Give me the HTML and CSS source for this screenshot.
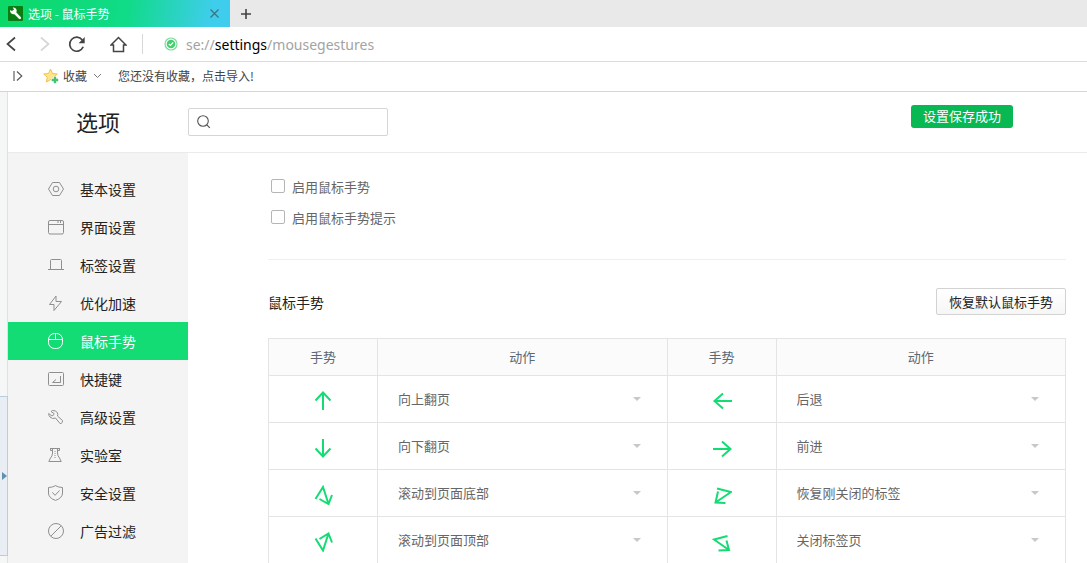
FILE: index.html
```html
<!DOCTYPE html>
<html lang="zh-CN">
<head>
<meta charset="utf-8">
<title>选项 - 鼠标手势</title>
<link rel="stylesheet" href="styles.css">
</head>
<body>
<div class="browser">
  <div class="tabbar">
    <div class="tab">
      <svg class="tab-logo" width="15" height="15" viewBox="0 0 15 15"><rect width="15" height="15" rx="1" fill="#0b7d10"/><path d="M5.500 5.500L11.800 11.800" stroke="#fff" stroke-width="2.600" stroke-linecap="round"/><path d="M2.200 4A3.300 3.300 0 1 0 4.800 1.600L6 3.800L4.300 5.200Z" fill="#fff"/></svg>
      <span class="tab-title">选项 - 鼠标手势</span>
      <button class="icon-button" aria-label="关闭"><svg width="9" height="9" viewBox="0 0 9 9"><path d="M.5 .5L8.500 8.500M8.500 .5L.5 8.500" stroke="#466f76" stroke-width="1.200"/></svg></button>
    </div>
    <button class="icon-button new-tab" aria-label="新标签"><svg width="10" height="10" viewBox="0 0 10 10"><path d="M5 0V10M0 5H10" stroke="#444" stroke-width="1.600"/></svg></button>
  </div>
  <div class="navbar">
    <button class="icon-button" aria-label="后退"><svg width="10" height="16" viewBox="0 0 10 16"><path d="M9 1.500L1.500 8L9 14.500" fill="none" stroke="#444" stroke-width="1.700"/></svg></button>
    <button class="icon-button forward" aria-label="前进"><svg width="10" height="16" viewBox="0 0 10 16"><path d="M1 1.500L8.500 8L1 14.500" fill="none" stroke="#d6d6d6" stroke-width="1.700"/></svg></button>
    <button class="icon-button reload" aria-label="刷新"><svg width="18" height="17" viewBox="0 0 18 17"><path d="M15.200 10.800A7 7 0 1 1 14.300 4" fill="none" stroke="#444" stroke-width="1.700"/><path d="M16.700 1V7.200H10.600Z" fill="#444"/></svg></button>
    <button class="icon-button home" aria-label="主页"><svg width="17" height="17" viewBox="0 0 17 17"><path d="M1 9L8.500 1.500L16 9H13.500V15.500H3.500V9Z" fill="none" stroke="#444" stroke-width="1.500"/></svg></button>
    <span class="nav-divider"></span>
    <svg class="safe" width="14" height="14" viewBox="0 0 14 14"><circle cx="7" cy="7" r="6" fill="none" stroke="#7bdc97" stroke-width="1.200"/><circle cx="7" cy="7" r="4.300" fill="#45cf6e"/><path d="M4.800 7L6.400 8.500L9.200 5.500" fill="none" stroke="#fff" stroke-width="1.100"/></svg>
    <span class="url">se://<span class="url-host">settings</span>/mousegestures</span>
  </div>
  <div class="bookmarks">
    <button class="icon-button" aria-label="展开"><svg width="10" height="12" viewBox="0 0 10 12"><path d="M1 1V11M4 1.500L8.800 6L4 10.500" fill="none" stroke="#555" stroke-width="1.100"/></svg></button>
    <button class="favorites"><svg width="16" height="16" viewBox="0 0 16 16"><path d="M7.500 1L9.500 5.500L14.300 6L10.700 9.300L11.700 14L7.500 11.600L3.300 14L4.300 9.300L.7 6L5.500 5.500Z" fill="#ffe68a" stroke="#f3c04e"/><path d="M12 8.500V15.500M8.500 12H15.500" stroke="#fff" stroke-width="4"/><path d="M12 8.800V15.200M8.800 12H15.200" stroke="#45c074" stroke-width="2.400"/></svg><span>收藏</span><svg width="9" height="6" viewBox="0 0 9 6"><path d="M1 1L4.500 4.500L8 1" fill="none" stroke="#777"/></svg></button>
    <a class="import" href="#">您还没有收藏，点击导入!</a>
  </div>

  <div class="page">
    <div class="edge"><button class="handle" aria-label="展开侧栏"><svg width="5" height="8" viewBox="0 0 5 8"><path d="M0 0L5 4L0 8Z" fill="#5f91b0"/></svg></button></div>
    <div class="settings">
      <header class="header">
        <h1 class="title">选项</h1>
        <label class="search"><svg width="14" height="14" viewBox="0 0 14 14"><circle cx="6" cy="6" r="5.300" fill="none" stroke="#555" stroke-width="1.100"/><path d="M9.800 9.800L12.800 12.800" stroke="#555" stroke-width="1.200"/></svg><input type="text" aria-label="搜索设置"></label>
        <div class="toast" role="status">设置保存成功</div>
      </header>
      <div class="body">
        <nav class="sidebar">
          <a class="item" href="#"><svg class="icon" viewBox="0 0 16 16"><path d="M4.500 1.500H11.500L15.500 8L11.500 14.500H4.500L.5 8Z"/><circle cx="8" cy="8" r="2.800"/></svg>基本设置</a>
          <a class="item" href="#"><svg class="icon" viewBox="0 0 16 16"><rect x=".5" y="1.500" width="15" height="13.500" rx="1.500"/><path d="M.5 5.500H15.500M10 2V4M12.500 2V4"/></svg>界面设置</a>
          <a class="item" href="#"><svg class="icon" viewBox="0 0 16 16"><path d="M0 12.500H3.500M12.500 12.500H16M2.500 12.500V3.500Q2.500 2.500 3.500 2.500H12.500Q13.500 2.500 13.500 3.500V12.500H2.500"/></svg>标签设置</a>
          <a class="item" href="#"><svg class="icon" viewBox="0 0 16 16"><path d="M8 1L1.500 9.500H6V15.500L13.500 6.500H8Z"/></svg>优化加速</a>
          <a class="item active" href="#" aria-current="page"><svg class="icon" viewBox="0 0 16 16"><rect x=".5" y=".5" width="14" height="15" rx="6"/><path d="M.5 6.500H14.500M7.500 .5V6.500"/></svg>鼠标手势</a>
          <a class="item" href="#"><svg class="icon" viewBox="0 0 16 16"><rect x=".5" y="1.500" width="15" height="13" rx="1"/><path d="M12.500 5V11.500H4.500L8 8.500"/></svg>快捷键</a>
          <a class="item" href="#"><svg class="icon" viewBox="0 0 16 16"><path d="M4.500 1.500Q8 1 9.500 4Q10 5.500 9.500 7L14.500 11.500Q15 13.500 13 14.500H12L7.500 9Q4.500 10.500 2 8Q.5 6.500 .7 4.500L4 7L6 5.500V4.500L3 2.500Z"/></svg>高级设置</a>
          <a class="item" href="#"><svg class="icon" viewBox="0 0 16 16"><path d="M2 1.500H12M4.500 1.500V6Q4.500 9 2.500 11L.8 14.500H13.200L11.500 11Q9.500 9 9.500 6V1.500M2.500 1.500V3.500H4.500M11.500 1.500V3.500H9.500"/><path d="M7 4V12" stroke-dasharray="1 1"/></svg>实验室</a>
          <a class="item" href="#"><svg class="icon" viewBox="0 0 16 16"><path d="M7.500 .6Q10.500 2.500 14.500 2.500V8Q14.500 13 7.500 15.400Q.5 13 .5 8V2.500Q4.500 2.500 7.500 .6ZM4.300 7.300L7 10.300L11.500 5.500"/></svg>安全设置</a>
          <a class="item" href="#"><svg class="icon" viewBox="0 0 16 16"><circle cx="8" cy="8" r="7.500"/><path d="M13.200 2.800L2.800 13.200"/></svg>广告过滤</a>
        </nav>
        <main class="main">
          <section class="options">
            <label class="option"><input type="checkbox">启用鼠标手势</label>
            <label class="option"><input type="checkbox">启用鼠标手势提示</label>
          </section>
          <div class="section-head">
            <h2>鼠标手势</h2>
            <button class="reset">恢复默认鼠标手势</button>
          </div>
          <table class="gestures">
            <colgroup><col class="col-gesture"><col><col class="col-gesture"><col></colgroup>
            <thead><tr><th>手势</th><th>动作</th><th>手势</th><th>动作</th></tr></thead>
            <tbody>
              <tr>
                <td><svg class="arrow" viewBox="0 0 20 20"><path d="M10 19V1.500M2.500 9.500L10 1.500L17.500 9.500"/></svg></td>
                <td><div class="pick"><select aria-label="上"><option>向上翻页</option></select></div></td>
                <td><svg class="arrow" viewBox="0 0 20 20"><path d="M20 10H2.500M11 2.500L2.500 10L11 17.500"/></svg></td>
                <td><div class="pick"><select aria-label="左"><option>后退</option></select></div></td>
              </tr>
              <tr>
                <td><svg class="arrow" viewBox="0 0 20 20"><path d="M10 1V18.500M2.500 10.500L10 18.500L17.500 10.500"/></svg></td>
                <td><div class="pick"><select aria-label="下"><option>向下翻页</option></select></div></td>
                <td><svg class="arrow" viewBox="0 0 20 20"><path d="M1 11H18.500M10 3.500L18.500 11L10 18.500"/></svg></td>
                <td><div class="pick"><select aria-label="右"><option>前进</option></select></div></td>
              </tr>
              <tr>
                <td><svg class="arrow" viewBox="0 0 20 20"><path d="M2.500 14L10 2L15.500 19M6.500 14L15.500 19L19 10"/></svg></td>
                <td><div class="pick"><select aria-label="上下"><option>滚动到页面底部</option></select></div></td>
                <td><svg class="arrow" viewBox="0 0 20 20"><path d="M5 3.500L19 7L3.500 17.500M6 6.500L3.500 17.500L13.500 18"/></svg></td>
                <td><div class="pick"><select aria-label="右左"><option>恢复刚关闭的标签</option></select></div></td>
              </tr>
              <tr>
                <td><svg class="arrow" viewBox="0 0 20 20"><path d="M2.500 6.500L10 18.500L15.500 1.500M6.500 7L15.500 1.500L19 10.500"/></svg></td>
                <td><div class="pick"><select aria-label="下上"><option>滚动到页面顶部</option></select></div></td>
                <td><svg class="arrow" viewBox="0 0 20 20"><path d="M15.500 4L2 7.500L17 18M14.500 8.500L17 18L6.500 18.500"/></svg></td>
                <td><div class="pick"><select aria-label="左右"><option>关闭标签页</option></select></div></td>
              </tr>
            </tbody>
          </table>
        </main>
      </div>
    </div>
  </div>
</div>
</body>
</html>
```

FILE: styles.css
```css
* { box-sizing: border-box; }
body {
  margin: 0;
  background: #fff;
  color: #222;
  font-family: "Noto Sans CJK SC", sans-serif;
  font-size: 13px;
}
button, input, select { font: inherit; color: inherit; }
button { cursor: pointer; }
a { color: inherit; text-decoration: none; }
h1, h2 { margin: 0; font-weight: 400; }
svg { display: block; flex: none; }

.browser { display: flex; flex-direction: column; height: 100vh; overflow: hidden; }
.icon-button { display: flex; padding: 0; border: 0; background: none; }

.tabbar { display: flex; flex: none; height: 27px; background: #e9e9e9; }
.tab {
  display: flex;
  align-items: center;
  gap: 5px;
  width: 230px;
  padding: 0 11px 0 8px;
  background: linear-gradient(100deg, #0cd868 0%, #10db88 55%, #3fcdee 92%);
  color: #fff;
  font-size: 12px;
}
.tab-title { flex: 1; }
.new-tab { align-self: center; margin-left: 11px; }

.navbar {
  display: flex;
  flex: none;
  align-items: center;
  height: 35px;
  padding-left: 6px;
  border-bottom: 1px solid #dcdcdc;
}
.forward { margin-left: 24px; }
.reload { margin-left: 18px; }
.home { margin-left: 24px; }
.nav-divider { width: 1px; height: 20px; margin: 0 21px 0 15px; background: #d8d8d8; }
.url { margin-left: 8px; color: #a3a3a3; font-family: "Noto Sans", sans-serif; font-size: 14px; }
.url-host { color: #000; }

.bookmarks {
  display: flex;
  flex: none;
  align-items: center;
  height: 30px;
  padding: 0 13px 2px;
  border-bottom: 1px solid #d2d6d4;
  color: #444;
  font-size: 12px;
}
.favorites {
  display: flex;
  align-items: center;
  gap: 4px;
  margin: 0 16px 0 20px;
  padding: 0;
  border: 0;
  background: none;
}
.favorites svg:last-child { margin-left: 2px; }

.page { display: flex; flex: 1; min-height: 0; }
.edge {
  display: flex;
  flex-direction: column;
  justify-content: flex-end;
  width: 8px;
  padding-bottom: 7px;
  border-right: 1px solid #e0e2e2;
  background: #f5f7f7;
}
.handle {
  display: flex;
  align-items: center;
  width: 8px;
  height: 160px;
  padding: 0 0 0 2px;
  border: 1px solid #b9cedc;
  border-left: 0;
  background: #e8eef4;
}
.settings { display: flex; flex: 1; flex-direction: column; min-width: 0; }
.header {
  display: flex;
  flex: none;
  align-items: center;
  height: 61px;
  padding-right: 74px;
  border-bottom: 1px solid #ebebeb;
}
.title { width: 180px; padding: 0 0 2px 68px; font-size: 22px; line-height: 32px; }
.search {
  display: flex;
  align-items: center;
  gap: 8px;
  width: 200px;
  height: 28px;
  padding: 0 8px;
  border: 1px solid #d5d5d5;
  border-radius: 2px;
}
.search input { flex: 1; min-width: 0; border: 0; outline: 0; background: none; }
.toast {
  align-self: flex-start;
  margin: 13px 0 0 auto;
  padding: 0 12px 1px;
  border-radius: 3px;
  background: #07b853;
  color: #fff;
  line-height: 22px;
}

.body { display: flex; flex: 1; min-height: 0; }
.sidebar { flex: none; width: 180px; padding-top: 17px; background: #f4f4f4; }
.item {
  display: flex;
  align-items: center;
  gap: 16px;
  height: 38px;
  padding-left: 40px;
  font-size: 14px;
}
.icon { width: 16px; height: 16px; fill: none; stroke: #8f8f8f; }
.active { background: #12dc73; color: #fff; }
.active .icon { stroke: #fff; }

.main { flex: 1; min-width: 0; padding: 17px 21px 0 80px; }
.options {
  display: flex;
  flex-direction: column;
  gap: 11px;
  padding: 6px 3px 32px;
  border-bottom: 1px solid #f0f0f0;
}
.option { display: flex; align-items: center; gap: 7px; height: 20px; color: #666; }
.option input {
  appearance: none;
  width: 14px;
  height: 14px;
  margin: 0;
  border: 1px solid #b5b5b5;
  border-radius: 2px;
  background: #fff;
}
.option input:checked { background: #12dc73; }
.section-head { display: flex; align-items: center; justify-content: space-between; padding: 28px 0 23px; }
.section-head h2 { font-size: 14px; line-height: 20px; }
.reset {
  height: 27px;
  padding: 0 12px 1px;
  border: 1px solid #d2d2d2;
  border-radius: 2px;
  background: linear-gradient(#fff, #f6f6f6);
}

.gestures { width: 100%; border-collapse: collapse; table-layout: fixed; color: #666; }
.col-gesture { width: 109px; }
.gestures th, .gestures td { padding: 0; border: 1px solid #e4e4e4; }
.gestures th { height: 37px; padding-bottom: 2px; background: #fbfbfb; color: #5c6873; font-weight: 400; }
.gestures td { height: 47px; }
.arrow { width: 20px; height: 20px; margin: 4px auto 0; fill: none; stroke: #12dc73; stroke-width: 2; }
.pick { display: grid; align-items: center; }
.pick select {
  grid-area: 1 / 1;
  width: 100%;
  height: 46px;
  padding: 0 40px 2px 20px;
  border: 0;
  outline: 0;
  appearance: none;
  background: none;
}
.pick::after {
  grid-area: 1 / 1;
  justify-self: end;
  margin-right: 26px;
  border: 4px solid transparent;
  border-top-color: #c8c8c8;
  border-bottom: 0;
  content: "";
  pointer-events: none;
}
```
